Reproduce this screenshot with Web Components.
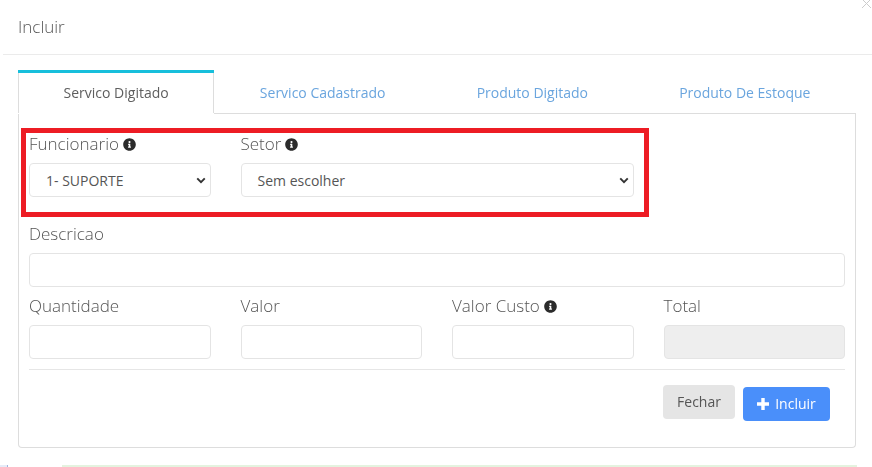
<!DOCTYPE html>
<html lang="pt"><head><meta charset="utf-8"><title>Incluir</title>
<style>
html,body{margin:0;padding:0;background:#fff;height:467px;overflow:hidden;font-family:"Open Sans",sans-serif;color:#555}
</style></head><body>
<inc-modal>
  <inc-tabs slot="tabs"></inc-tabs>
  <field-row cols="1fr 1fr 1fr 1fr" after="18">
    <form-field label="Funcionario" info type="select" value="1- SUPORTE"></form-field>
    <form-field label="Setor" info type="select" value="Sem escolher" span="2"></form-field>
  </field-row>
  <field-row cols="1fr">
    <form-field label="Descricao"></form-field>
  </field-row>
  <field-row cols="1fr 1fr 1fr 1fr">
    <form-field label="Quantidade"></form-field>
    <form-field label="Valor"></form-field>
    <form-field label="Valor Custo" info></form-field>
    <form-field label="Total" disabled></form-field>
  </field-row>
</inc-modal>
<script>
const INFO='<svg viewBox="0 0 512 512" width="13" height="13" aria-hidden="true"><path fill="#2b2b2b" d="M256 8C119 8 8 119 8 256s111 248 248 248 248-111 248-248S393 8 256 8zm0 110a42 42 0 1 1 0 84 42 42 0 0 1 0-84zm56 254c0 7-5 12-12 12h-88c-7 0-12-5-12-12v-24c0-7 5-12 12-12h12v-64h-12c-7 0-12-5-12-12v-24c0-7 5-12 12-12h64c7 0 12 5 12 12v100h12c7 0 12 5 12 12z"/></svg>';
class IncModal extends HTMLElement{constructor(){super();this.attachShadow({mode:'open'}).innerHTML=`<style>
:host{display:block;position:relative;width:872px;height:467px;box-sizing:border-box;overflow:hidden;background:transparent;opacity:.999}
.close{position:absolute;right:-1px;top:-1px;width:13px;height:11px}
header{margin-left:3px;height:55px;box-sizing:border-box;border-bottom:1px solid #ebebeb;padding:16px 0 0 15px;font:300 17px/22px "Open Sans",sans-serif;color:#555}
.wrap{padding:15px 16px 0 18px}
.panel{border:1px solid #ddd;border-top:0;border-radius:0 0 4px 4px;height:334px;box-sizing:border-box;padding:15px 10px 0;position:relative;width:838px}
.body{display:flex;flex-direction:column;gap:0}
hr{border:0;border-top:1px solid #e6e6e6;margin:6px 0 15px}
.actions{display:flex;justify-content:flex-end;align-items:flex-start;gap:8px;padding-right:15px}
.red{position:absolute;left:2px;top:14px;width:628px;height:89px;box-sizing:border-box;border:5px solid #ed1c24;pointer-events:none}
.strip{position:absolute;left:62px;top:465px;width:795px;height:2px;background:#e4f3df}
.blue{position:absolute;left:0;top:465px;width:8px;height:2px;background:#e6ecf8;border-right:1px solid #9db4dd;box-sizing:border-box}
</style>
<svg class="close" viewBox="0 0 13 11" aria-hidden="true"><path d="M2 0l9 9M11 0L2 9" stroke="#ccc" fill="none"/></svg>
<header>Incluir</header>
<div class="wrap"><slot name="tabs"></slot>
<div class="panel"><div class="body"><slot></slot></div><hr>
<div class="actions"><inc-button>Fechar</inc-button><inc-button primary>Incluir</inc-button></div>
<div class="red"></div></div></div>
<div class="blue"></div><div class="strip"></div>`}}
class IncTabs extends HTMLElement{constructor(){super();const t=['Servico Digitado','Servico Cadastrado','Produto Digitado','Produto De Estoque'];
this.attachShadow({mode:'open'}).innerHTML=`<style>
:host{display:flex;width:838px;height:44px;font:400 14px/20px "Open Sans",sans-serif}
a{flex:1 1 auto;box-sizing:border-box;text-align:center;padding-top:10px;border-bottom:1px solid #ddd;color:#6aa5de;border-top:3px solid transparent}
a.on{color:#5e5e5e;border-top-color:#17bfdc;box-shadow:inset 1px 0 #ddd,inset -1px 0 #ddd;border-bottom-color:transparent}
</style>`+t.map((x,i)=>`<a class="${i?'':'on'}">${x}</a>`).join('')}}
class FieldRow extends HTMLElement{constructor(){super();this.attachShadow({mode:'open'}).innerHTML=`<style>
:host{display:grid;column-gap:30px}</style><slot></slot>`}
connectedCallback(){this.style.gridTemplateColumns=this.getAttribute('cols');if(this.hasAttribute('after'))this.style.marginBottom=this.getAttribute('after')+'px'}}
class FormField extends HTMLElement{constructor(){super();this.attachShadow({mode:'open'})}
connectedCallback(){const l=this.getAttribute('label'),i=this.hasAttribute('info'),ty=this.getAttribute('type'),v=this.getAttribute('value')||'',d=this.hasAttribute('disabled');
if(this.hasAttribute('span'))this.style.gridColumn='span '+this.getAttribute('span');
this.shadowRoot.innerHTML=`<style>
:host{display:block;height:72px}
label{display:flex;align-items:center;gap:4px;height:30px;font:300 17px/22px "Open Sans",sans-serif;color:#555;box-sizing:border-box}
.c{display:flex;align-items:center;height:34px;box-sizing:border-box;border:1px solid #e4e4e4;border-radius:4px;background:#fff;padding:2px 0 0 16px;font:400 14px/20px "Open Sans",sans-serif;color:#555;position:relative;margin-top:4px}
.c.d{background:#eee}
.c svg{position:absolute;right:4px;top:13px}
</style><label>${l}${i?INFO:''}</label>`+(ty==='select'?`<div class="c">${v}<svg width="10" height="7" viewBox="0 0 11 8" aria-hidden="true"><path d="M1.2 1.5l4.3 4.3 4.3-4.3" fill="none" stroke="#333" stroke-width="2.2"/></svg></div>`:`<div class="c${d?' d':''}"></div>`)}}
class IncButton extends HTMLElement{constructor(){super();const p=this.hasAttribute('primary');
this.attachShadow({mode:'open'}).innerHTML=`<style>
:host{display:inline-flex;align-items:center;justify-content:center;gap:6px;height:34px;box-sizing:border-box;border-radius:4px;font:400 14px/20px "Open Sans",sans-serif}
:host(:not([primary])){width:72px;background:#e5e5e5;color:#555}
:host([primary]){width:87px;background:#4a8ffa;color:#fff;margin-top:2px}
</style>${p?'<svg width="12" height="12" viewBox="0 0 12 12" aria-hidden="true"><path d="M6 0v12M0 6h12" stroke="#fff" stroke-width="3.4"/></svg>':''}<slot></slot>`}}
customElements.define('inc-button',IncButton);customElements.define('form-field',FormField);customElements.define('field-row',FieldRow);customElements.define('inc-tabs',IncTabs);customElements.define('inc-modal',IncModal);
</script></body></html>
